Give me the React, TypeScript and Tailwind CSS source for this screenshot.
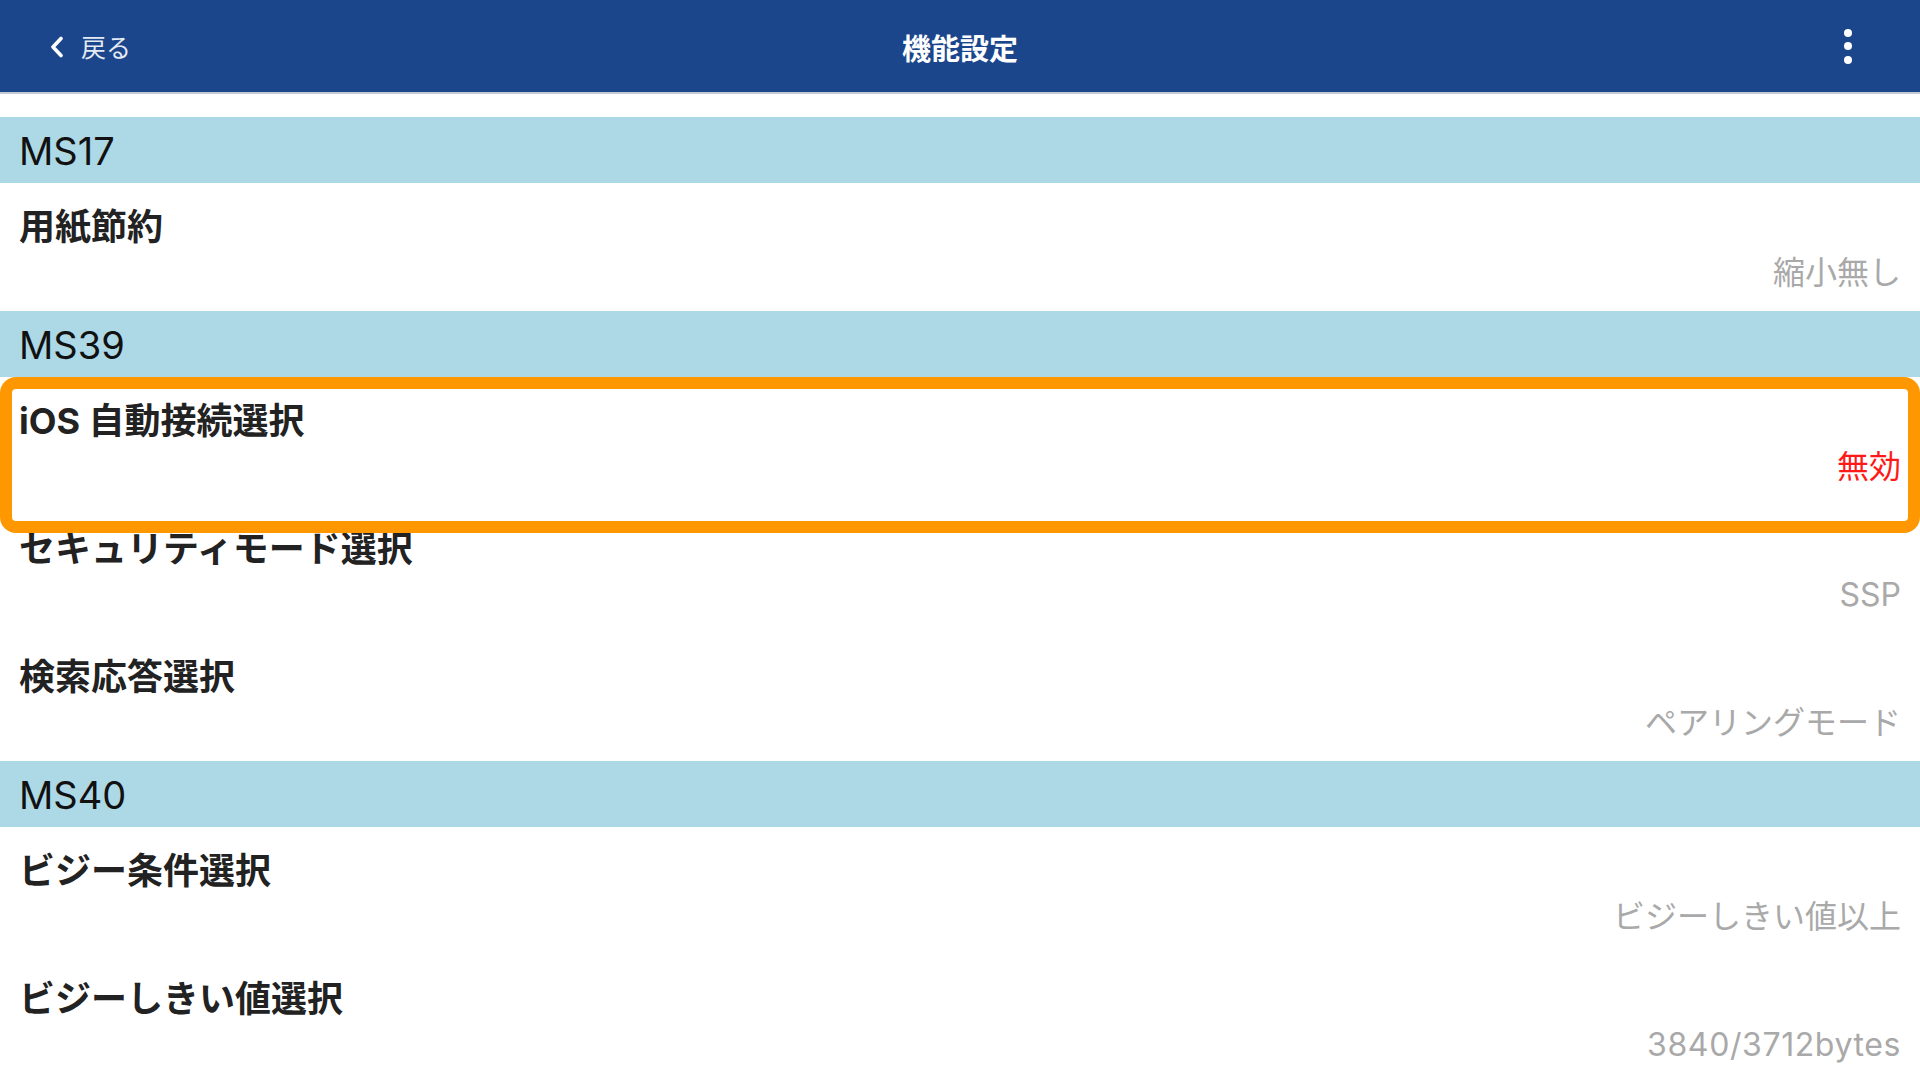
const FONT = "font-['Inter','Noto_Sans_CJK_JP',sans-serif]";

type Item = { label: string; value: string; red?: boolean; wide?: boolean; highlight?: boolean };
type Section = { title: string; items: Item[] };

const sections: Section[] = [
  { title: "MS17", items: [{ label: "用紙節約", value: "縮小無し" }] },
  {
    title: "MS39",
    items: [
      { label: "iOS 自動接続選択", value: "無効", red: true, highlight: true },
      { label: "セキュリティモード選択", value: "SSP" },
      { label: "検索応答選択", value: "ペアリングモード" },
    ],
  },
  {
    title: "MS40",
    items: [
      { label: "ビジー条件選択", value: "ビジーしきい値以上" },
      { label: "ビジーしきい値選択", value: "3840/3712bytes", wide: true },
    ],
  },
];

function Row({ item }: { item: Item }) {
  let valueCls = "mt-[12px] self-end text-[32px] leading-none text-[#a9a9a9]";
  if (item.red) valueCls = "mt-[12px] self-end text-[32px] leading-none text-[#ff1a1a]";
  if (item.wide) valueCls = "mt-[12px] self-end text-[32px] leading-none tracking-[0.6px] text-[#a9a9a9]";

  return (
    <div className="relative flex h-[128px] flex-col bg-white pl-[19px] pr-[19px]">
      <div className="pt-[26px] text-[36px] font-bold leading-none text-[#222222]">
        {item.label}
      </div>
      <div className={valueCls}>{item.value}</div>
      {/* 強調枠 */}
      {item.highlight && (
        <div className="pointer-events-none absolute inset-x-0 top-0 z-10 h-[156px] rounded-[16px] border-[12px] border-[#ff9800]" />
      )}
    </div>
  );
}

export default function App() {
  return (
    <div className={`relative h-[1092px] w-full overflow-hidden bg-white ${FONT}`}>
      {/* ヘッダー */}
      <div className="grid h-[94px] grid-cols-[1fr_auto_1fr] items-center border-b-2 border-[#c3cad6] bg-[#1b468c]">
        <div className="flex items-center gap-[17px] pl-[50px] pt-[2px]">
          <svg width="14" height="22" viewBox="0 0 14 22" fill="none">
            <polyline
              points="11,2.5 3,11 11,19.5"
              stroke="white"
              strokeWidth="3.6"
              strokeLinecap="round"
              strokeLinejoin="round"
            />
          </svg>
          <span className="pt-[2px] text-[25px] leading-none text-[#e4eaf4]">戻る</span>
        </div>
        <div className="pt-[6px] text-[29px] font-bold leading-none text-white">機能設定</div>
        <div className="flex justify-end pr-[68px]">
          <div className="flex flex-col gap-[5.5px]">
            <span className="h-[8px] w-[8px] rounded-full bg-white" />
            <span className="h-[8px] w-[8px] rounded-full bg-white" />
            <span className="h-[8px] w-[8px] rounded-full bg-white" />
          </div>
        </div>
      </div>

      <div className="h-[23px] bg-white" />

      {sections.map((s) => (
        <div key={s.title}>
          <div className="flex h-[66px] items-center bg-[#add8e6] pl-[19px] pt-[2px] text-[38px] leading-none text-[#111111]">
            {s.title}
          </div>
          {s.items.map((it) => (
            <Row key={it.label} item={it} />
          ))}
        </div>
      ))}
    </div>
  );
}
